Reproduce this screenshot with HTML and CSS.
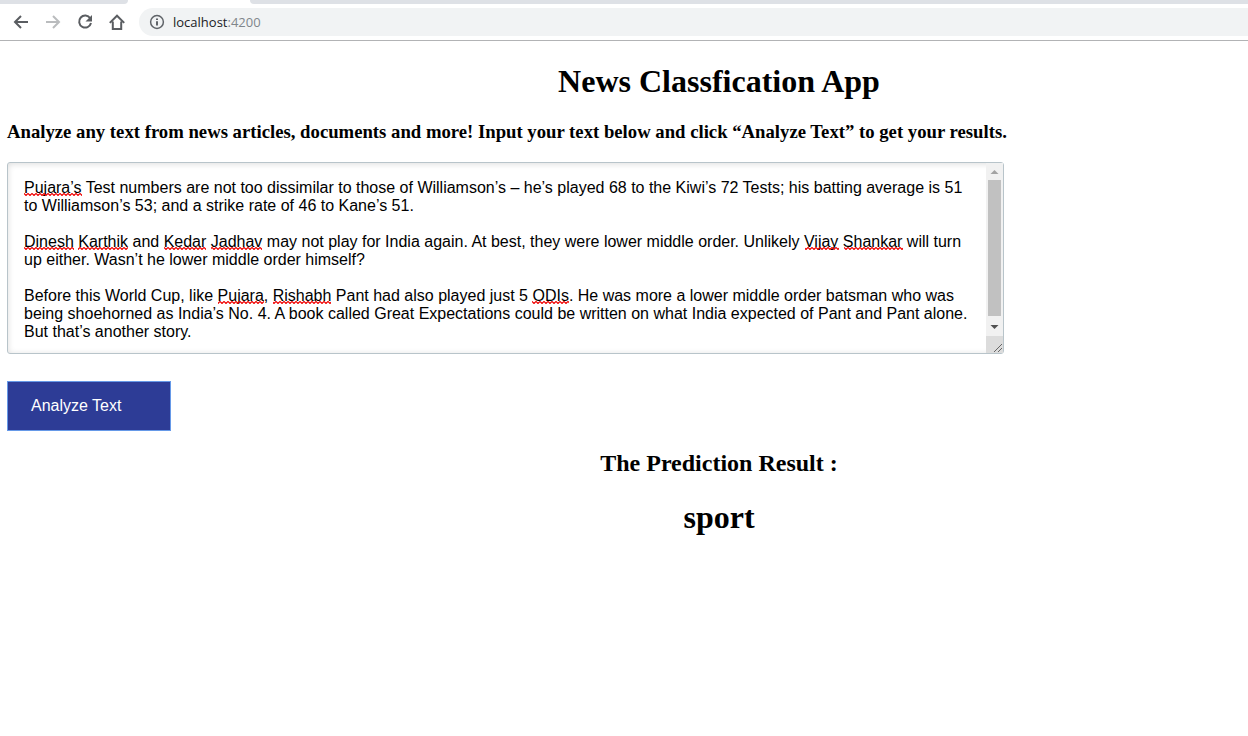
FILE: index.html
```html
<!DOCTYPE html>
<html lang="en">
<head>
<meta charset="utf-8">
<meta name="viewport" content="width=device-width, initial-scale=1">
<title>News Classfication App</title>
<link rel="stylesheet" href="styles.css">
</head>
<body>
<header class="browser">
  <div class="tabs"><span class="tab-left"></span><span class="tab-active"></span><span class="tab-right"></span></div>
  <nav class="toolbar" aria-label="Browser">
    <button class="nav-button" type="button" aria-label="Back"><svg viewBox="0 0 16 16"><path d="M15 8H2M8 2L2 8l6 6"/></svg></button>
    <button class="nav-button disabled" type="button" aria-label="Forward" disabled><svg viewBox="0 0 16 16"><path d="M1 8h13M8 2l6 6-6 6"/></svg></button>
    <button class="nav-button" type="button" aria-label="Reload"><svg viewBox="0 0 16 16"><path d="M13.2 4.3A6 6 0 1 0 14 9"/><path class="solid" d="M15 1v6.5H8.5z"/></svg></button>
    <button class="nav-button" type="button" aria-label="Home"><svg viewBox="0 0 16 16"><path d="M.8 8.9L8 1.7l7.2 7.2M3.8 7.5V15h8.4V7.5"/></svg></button>
    <div class="address">
      <svg class="info" viewBox="0 0 16 16" aria-hidden="true"><circle cx="8" cy="8" r="6.4"/><path d="M8 7.2v4.2M8 4.4v1.7"/></svg>
      <span class="host">localhost<span class="port">:4200</span></span>
    </div>
  </nav>
</header>
<main class="page">
  <h1 class="title">News Classfication App</h1>
  <h3 class="intro"><label for="news">Analyze any text from news articles, documents and more! Input your text below and click “Analyze Text” to get your results.</label></h3>
  <form class="form">
    <div class="editor">
      <textarea class="input" id="news" spellcheck="false">Pujara’s Test numbers are not too dissimilar to those of Williamson’s – he’s played 68 to the Kiwi’s 72 Tests; his batting average is 51 to Williamson’s 53; and a strike rate of 46 to Kane’s 51.

Dinesh Karthik and Kedar Jadhav may not play for India again. At best, they were lower middle order. Unlikely Vijay Shankar will turn up either. Wasn’t he lower middle order himself?

Before this World Cup, like Pujara, Rishabh Pant had also played just 5 ODIs. He was more a lower middle order batsman who was being shoehorned as India’s No. 4. A book called Great Expectations could be written on what India expected of Pant and Pant alone. But that’s another story.</textarea>
      <svg class="marks" aria-hidden="true">
        <defs><pattern id="wave" width="4" height="3" patternUnits="userSpaceOnUse"><path d="M-2 2.5L0 .5 2 2.5 4 .5 6 2.5" fill="none" stroke="#f00000" stroke-width="1.2"/></pattern></defs>
        <g fill="url(#wave)" transform="translate(1 1)">
          <rect x="16" y="30" width="58" height="3"/>
          <rect x="16" y="84" width="50" height="3"/><rect x="70" y="84" width="50" height="3"/><rect x="156" y="84" width="42" height="3"/><rect x="203" y="84" width="51" height="3"/><rect x="797" y="84" width="34" height="3"/><rect x="836" y="84" width="59" height="3"/>
          <rect x="210" y="138" width="46" height="3"/><rect x="265" y="138" width="58" height="3"/><rect x="524" y="138" width="37" height="3"/>
        </g>
      </svg>
      <div class="scrollbar" aria-hidden="true">
        <svg class="arrow up" viewBox="0 0 17 17"><path d="M4.5 11l4-4 4 4z"/></svg>
        <div class="thumb"></div>
        <svg class="arrow" viewBox="0 0 17 20"><path d="M4.5 9h8l-4 4z"/></svg>
        <svg class="grip" viewBox="0 0 17 17"><path d="M8 16l8-8M12 16l4-4"/></svg>
      </div>
    </div>
    <button class="analyze" type="button">Analyze Text</button>
  </form>
  <section class="result">
    <h2 class="result-title">The Prediction Result :</h2>
    <h1 class="result-value">sport</h1>
  </section>
</main>
</body>
</html>
```
FILE: styles.css
```css
* { box-sizing: border-box; }
body { margin: 0; background: #fff; color: #000; font-family: "Liberation Serif", "Times New Roman", serif; }
h1, h2, h3 { margin: 0; }

.browser { border-bottom: 1px solid #b2b3b5; }
.tabs { display: flex; height: 4px; }
.tab-left { width: 128px; background: #dee1e6; border-bottom-right-radius: 4px; }
.tab-active { width: 122px; }
.tab-right { flex: 1; background: #dee1e6; border-bottom-left-radius: 4px; }
.toolbar { display: flex; align-items: center; gap: 16px; height: 36px; padding-left: 13px; }
.nav-button { display: block; width: 16px; height: 16px; padding: 0; border: 0; background: none; }
.nav-button svg { display: block; width: 16px; height: 16px; fill: none; stroke: #5a5d61; stroke-width: 2; }
.nav-button .solid { fill: #5a5d61; stroke: none; }
.nav-button.disabled svg { stroke: #babcbe; }
.address { display: flex; flex: 1; align-items: center; gap: 8px; height: 28px; margin-left: -2px; padding-left: 10px; border-radius: 14px 0 0 14px; background: #f1f3f4; font: 13px/18px "Open Sans", "Noto Sans", sans-serif; }
.info { width: 16px; height: 16px; fill: none; stroke: #5f6368; stroke-width: 2; }
.info circle { stroke-width: 1.5; }
.host { color: #202124; }
.port { color: #80868b; }

.page { padding: 22px 8px 0 7px; }
.title, .result { padding-left: 191px; text-align: center; }
.title { font-size: 32px; line-height: 36px; }
.intro { margin-top: 22px; line-height: 22px; }
.editor { position: relative; width: 100%; max-width: 997px; margin-top: 19px; }
.input { display: block; width: 100%; height: 192px; padding: 16px 34px 12px 16px; overflow: hidden; resize: none; border: 1px solid #b8c4ca; border-radius: 3px; outline: 0; background: #fff; box-shadow: inset 0 1px 6px rgba(0, 0, 0, .14); color: #000; font: 16px/18px "Liberation Sans", Arial, sans-serif; }
.marks { position: absolute; top: 0; left: 0; width: 100%; height: 100%; pointer-events: none; }
.scrollbar { position: absolute; top: 1px; right: 1px; bottom: 1px; display: flex; flex-direction: column; width: 17px; background: #f1f1f1; }
.thumb { flex: 1; margin: 0 2px; background: #c1c1c1; }
.arrow { width: 17px; height: 20px; fill: #505050; }
.arrow.up { height: 17px; fill: #a3a3a3; }
.grip { width: 17px; height: 17px; background: #dcdcdc; fill: none; stroke: #666; }
.analyze { display: block; width: 164px; height: 50px; margin-top: 27px; padding: 0 23px; border: 1px solid #6699e8; background: #2d3c96; color: #fff; font: 16px/18px "Liberation Sans", Arial, sans-serif; text-align: left; }
.result { padding-top: 18px; }
.result-title { font-size: 24px; line-height: 28px; }
.result-value { margin-top: 22px; font-size: 32px; line-height: 37px; }
```
